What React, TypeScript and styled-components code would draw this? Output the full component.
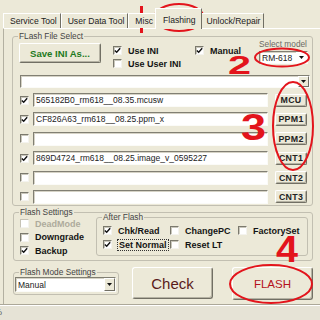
import React from 'react';
import styled, { createGlobalStyle } from 'styled-components';

const RED = '#e3141c';

const GlobalStyle = createGlobalStyle`
  * { box-sizing: border-box; }
  html, body { margin: 0; padding: 0; background: #ece9d8; }
`;

const Window = styled.div`
  position: relative;
  width: 320px;
  height: 320px;
  overflow: hidden;
  display: flex;
  flex-direction: column;
  background: #ece9d8;
  font-family: "Liberation Sans", Arial, sans-serif;
  font-size: 8.5px;
  color: #111;
`;

const TabBar = styled.div`
  flex: none;
  display: flex;
  align-items: flex-end;
  height: 28px;
  padding-left: 3px;
`;

const Tab = styled.div<{ $active?: boolean }>`
  position: relative;
  z-index: ${p => (p.$active ? 2 : 1)};
  height: ${p => (p.$active ? '21px' : '15px')};
  margin: ${p => (p.$active ? '0 -2px -1px' : '0')};
  padding: ${p => (p.$active ? '2px 5px 0 7px' : '0 3px 0 6px')};
  display: flex;
  align-items: center;
  background: #ece9d8;
  border-top: 1px solid #fff;
  border-left: 1px solid #fff;
  border-right: 1px solid #716f64;
  white-space: nowrap;
  font-size: 8.6px;
  color: #222;
`;

const Page = styled.div`
  flex: none;
  height: 276px;
  margin-left: 3px;
  padding-left: 8px;
  border-top: 1px solid #fff;
  border-left: 1px solid #b3b0a1;
  display: flex;
  flex-direction: column;
`;

const Group = styled.fieldset<{ $w: number }>`
  margin: 0;
  padding: 0;
  min-width: 0;
  width: ${p => p.$w}px;
  border: 1px solid #c2bfb1;
  border-radius: 3px;
`;

const Legend = styled.legend`
  margin-left: 5px;
  padding: 0 1px;
  font-size: 8.3px;
  line-height: 9px;
  color: #444;
`;

const FileGroup = styled(Group)`
  margin-top: 3px;
`;

const FileBody = styled.div`
  padding: 0 4px 1px 6px;
`;

const TopRow = styled.div`
  display: flex;
  align-items: flex-start;
  height: 24px;
`;

const RaisedButton = styled.button`
  padding: 0;
  margin: 0;
  font-family: inherit;
  background: #ece9d8;
  border: 1px solid;
  border-color: #fff #716f64 #716f64 #fff;
  box-shadow: inset -1px -1px 0 #b5b2a3;
  border-radius: 2px;
  color: #1a1a1a;
  cursor: default;
`;

const SaveButton = styled(RaisedButton)`
  width: 82px;
  height: 20px;
  margin-top: 2px;
  font-size: 9.6px;
  font-weight: bold;
  color: #1f7a22;
`;

const CheckStack = styled.div`
  margin: 3px 0 0 12px;
  width: 82px;
  display: flex;
  flex-direction: column;
`;

const CheckItem = styled.label<{ $muted?: boolean; $h?: number }>`
  display: flex;
  align-items: center;
  gap: 6px;
  height: ${p => p.$h ?? 13}px;
  font-size: 9px;
  font-weight: bold;
  white-space: nowrap;
  color: ${p => (p.$muted ? '#aeab9c' : '#141414')};
`;

const ManualItem = styled(CheckItem)`
  margin-top: 3px;
`;

const FocusText = styled.span`
  outline: 1px dotted #333;
  outline-offset: 0;
  padding: 0 1px;
`;

const Box = styled.span<{ $muted?: boolean }>`
  flex: none;
  width: 9px;
  height: 9px;
  display: flex;
  align-items: center;
  justify-content: center;
  background: #fff;
  border: 1px solid;
  border-color: ${p => (p.$muted ? '#c6c3b5 #f4f3ee #f4f3ee #c6c3b5' : '#7b796d #f4f3ee #f4f3ee #7b796d')};
  box-shadow: ${p => (p.$muted ? 'none' : 'inset 1px 1px 0 #c9c7bb')};
`;

const ModelCol = styled.div`
  margin: -2px 0 0 auto;
  width: 49px;
  display: flex;
  flex-direction: column;
`;

const ModelLabel = styled.span`
  font-size: 8.3px;
  line-height: 10px;
  color: #6b6a64;
  white-space: nowrap;
`;

const Sunken = styled.div<{ $h: number }>`
  display: flex;
  align-items: center;
  height: ${p => p.$h}px;
  background: #fff;
  border: 1px solid;
  border-color: #817f73 #fbfbf8 #fbfbf8 #817f73;
  box-shadow: inset 1px 1px 0 #d6d3c6;
  font-size: 8.5px;
  color: #222;
  white-space: nowrap;
  overflow: hidden;
`;

const SelectText = styled.span`
  flex: 1;
  padding-left: 2px;
`;

const ArrowButton = styled.span<{ $plain?: boolean }>`
  flex: none;
  width: 11px;
  height: 100%;
  display: flex;
  align-items: center;
  justify-content: center;
  background: ${p => (p.$plain ? '#fff' : '#ece9d8')};
  border: ${p => (p.$plain ? 'none' : '1px solid')};
  border-color: #fff #716f64 #716f64 #fff;
`;

const ModelSelect = styled(Sunken)`
  margin-top: 2px;
`;

const ComboField = styled(Sunken)`
  margin: 10px -2px 0 1px;
`;

const FileRows = styled.div`
  margin-top: 5px;
  display: flex;
  flex-direction: column;
  gap: 5.4px;
`;

const FileRow = styled.div`
  display: flex;
  align-items: center;
  height: 14px;
  padding-left: 1px;
`;

const PathField = styled(Sunken)`
  width: 235px;
  margin-left: 4px;
  padding-left: 2px;
`;

const RowButton = styled(RaisedButton)`
  width: 32px;
  height: 13px;
  margin-left: 7px;
  font-size: 8.8px;
  font-weight: bold;
  letter-spacing: 0.3px;
  color: #222;
`;

const SettingsGroup = styled(Group)`
  margin: 2px 0 0 1px;
`;

const SettingsBody = styled.div`
  display: flex;
  align-items: flex-start;
  padding: 0 4px 3px 6px;
`;

const LeftCol = styled.div`
  width: 76px;
  display: flex;
  flex-direction: column;
`;

const AfterGroup = styled(Group)`
  margin-top: -4px;
`;

const AfterBody = styled.div`
  display: grid;
  grid-template-columns: 67px 68px 1fr;
  grid-auto-rows: 14px;
  padding: 2px 0 3px 6px;
`;

const BottomRow = styled.div`
  display: flex;
  align-items: flex-start;
  margin-top: 6px;
`;

const ModeGroup = styled(Group)`
  margin: 1px 0 0 1px;
`;

const ModeBody = styled.div`
  padding: 0 2px 2px 1px;
`;

const BigButton = styled(RaisedButton)<{ $ml: number; $h: number }>`
  width: 81px;
  height: ${p => p.$h}px;
  margin-left: ${p => p.$ml}px;
  border-radius: 3px;
`;

const CheckLabel = styled.span`
  font-size: 15px;
  color: #5a1a1a;
`;

const FlashLabel = styled.span`
  font-size: 11.5px;
  color: #b4121c;
`;

const StatusBar = styled.div`
  flex: 1;
  margin-left: -3px;
  padding: 2px 0 0 0;
  border-top: 1px solid #aca899;
  box-shadow: inset 0 1px 0 #fff;
  background: #e6e3d6;
  font-size: 9px;
  color: #555;
`;

const StatusText = styled.span`
  margin-left: -3px;
`;

const Marks = styled.svg`
  position: absolute;
  left: 0;
  top: 0;
  width: 320px;
  height: 320px;
  pointer-events: none;
`;

const Digit = styled.text`
  font-family: "Liberation Sans", Arial, sans-serif;
  font-weight: bold;
  fill: ${RED};
`;

function Tick() {
  return (
    <svg width="7" height="7" viewBox="0 0 7 7">
      <path d="M0.8 3.4 L2.7 5.3 L6.2 1.2" fill="none" stroke="#111" strokeWidth="1.4" />
    </svg>
  );
}

function Check({ label, on, muted, focus, h }: { label: string; on?: boolean; muted?: boolean; focus?: boolean; h?: number }) {
  return (
    <CheckItem $muted={muted} $h={h}>
      <Box $muted={muted}>{on && <Tick />}</Box>
      {focus ? <FocusText>{label}</FocusText> : label}
    </CheckItem>
  );
}

function Arrow() {
  return (
    <svg width="5" height="3" viewBox="0 0 5 3">
      <path d="M0 0 H5 L2.5 3 Z" fill="#111" />
    </svg>
  );
}

const files = [
  { on: true, path: '565182B0_rm618__08.35.mcusw', btn: 'MCU' },
  { on: true, path: 'CF826A63_rm618__08.25.ppm_x', btn: 'PPM1' },
  { on: false, path: '', btn: 'PPM2' },
  { on: true, path: '869D4724_rm618__08.25.image_v_0595227', btn: 'CNT1' },
  { on: false, path: '', btn: 'CNT2' },
  { on: false, path: '', btn: 'CNT3' },
];

export default function App() {
  return (
    <>
      <GlobalStyle />
      <Window>
        <TabBar>
          <Tab>Service Tool</Tab>
          <Tab>User Data Tool</Tab>
          <Tab>Misc</Tab>
          <Tab $active>Flashing</Tab>
          <Tab>Unlock/Repair</Tab>
        </TabBar>

        <Page>
          <FileGroup $w={301}>
            <Legend>FLash File Select</Legend>
            <FileBody>
              <TopRow>
                <SaveButton>Save INI As...</SaveButton>
                <CheckStack>
                  <Check label="Use INI" on />
                  <Check label="Use User INI" />
                </CheckStack>
                <ManualItem>
                  <Box><Tick /></Box>
                  Manual
                </ManualItem>
                <ModelCol>
                  <ModelLabel>Select model</ModelLabel>
                  <ModelSelect $h={13}>
                    <SelectText>RM-618</SelectText>
                    <ArrowButton $plain><Arrow /></ArrowButton>
                  </ModelSelect>
                </ModelCol>
              </TopRow>

              <ComboField $h={13}>
                <SelectText />
                <ArrowButton><Arrow /></ArrowButton>
              </ComboField>

              <FileRows>
                {files.map(f => (
                  <FileRow key={f.btn}>
                    <Box>{f.on && <Tick />}</Box>
                    <PathField $h={14}>{f.path}</PathField>
                    <RowButton>{f.btn}</RowButton>
                  </FileRow>
                ))}
              </FileRows>
            </FileBody>
          </FileGroup>

          <SettingsGroup $w={300}>
            <Legend>Flash Settings</Legend>
            <SettingsBody>
              <LeftCol>
                <Check label="DeadMode" muted h={13.5} />
                <Check label="Downgrade" h={13.5} />
                <Check label="Backup" on h={13.5} />
              </LeftCol>
              <AfterGroup $w={212}>
                <Legend>After Flash</Legend>
                <AfterBody>
                  <Check label="Chk/Read" on h={14} />
                  <Check label="ChangePC" h={14} />
                  <Check label="FactorySet" h={14} />
                  <Check label="Set Normal" on focus h={14} />
                  <Check label="Reset LT" h={14} />
                </AfterBody>
              </AfterGroup>
            </SettingsBody>
          </SettingsGroup>

          <BottomRow>
            <ModeGroup $w={106}>
              <Legend>Flash Mode Settings</Legend>
              <ModeBody>
                <Sunken $h={15}>
                  <SelectText>Manual</SelectText>
                  <ArrowButton><Arrow /></ArrowButton>
                </Sunken>
              </ModeBody>
            </ModeGroup>
            <BigButton $ml={13} $h={32}><CheckLabel>Check</CheckLabel></BigButton>
            <BigButton $ml={19} $h={33}><FlashLabel>FLASH</FlashLabel></BigButton>
          </BottomRow>
        </Page>

        <StatusBar><StatusText>%</StatusText></StatusBar>

        <Marks viewBox="0 0 320 320">
          <g fill="none" stroke={RED} strokeWidth="2">
            <ellipse cx="179" cy="17.5" rx="24.5" ry="13.5" />
            <ellipse cx="282" cy="57.5" rx="27" ry="9" />
            <ellipse cx="293" cy="126" rx="20" ry="44" />
            <ellipse cx="271" cy="284" rx="41" ry="19" />
          </g>
          <line x1="141.5" y1="6" x2="141.5" y2="33" stroke={RED} strokeWidth="3" />
          <Digit x="228" y="74" fontSize="25" textLength="23" lengthAdjust="spacingAndGlyphs">2</Digit>
          <Digit x="241" y="140" fontSize="37" textLength="25" lengthAdjust="spacingAndGlyphs">3</Digit>
          <Digit x="276" y="262" fontSize="37" textLength="22" lengthAdjust="spacingAndGlyphs">4</Digit>
        </Marks>
      </Window>
    </>
  );
}
